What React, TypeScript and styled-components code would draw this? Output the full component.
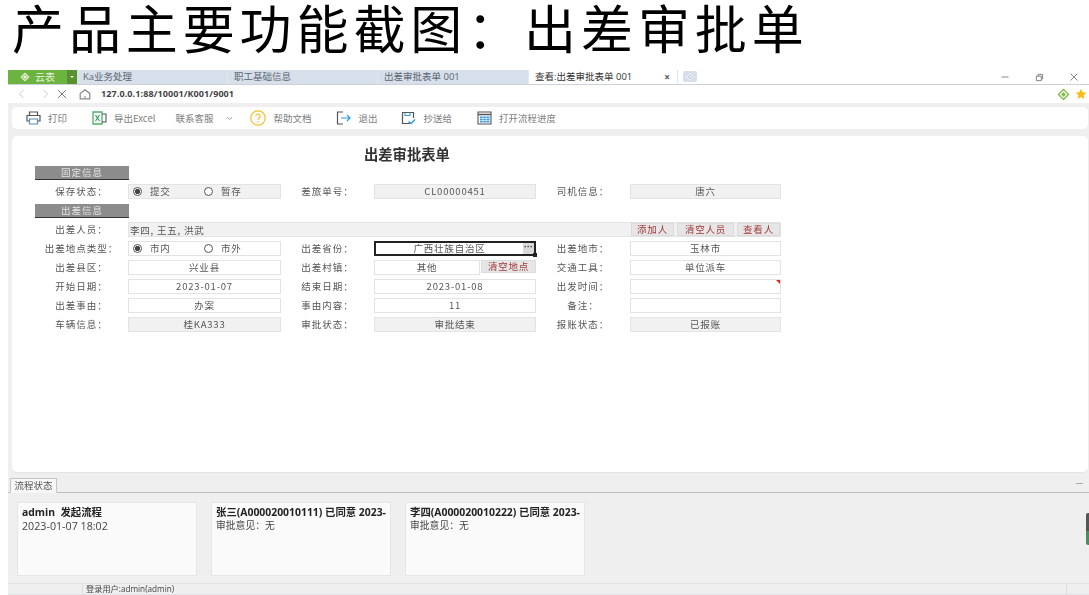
import React from "react";
import styled, { createGlobalStyle } from "styled-components";

const CJK = `"Noto Sans CJK SC", sans-serif`;
const UI = `"Open Sans", "Noto Sans CJK SC", sans-serif`;

const Global = createGlobalStyle`
  html, body { margin: 0; padding: 0; background: #fff; }
  body { width: 1089px; height: 595px; overflow: hidden; font-family: ${UI}; }
  * { box-sizing: border-box; }
`;

const Page = styled.div`
  width: 1089px;
  height: 595px;
  display: flex;
  flex-direction: column;
  overflow: hidden;
`;
const Headline = styled.h1`
  margin: 0;
  height: 70px;
  padding-left: 12px;
  font: 400 52px/54px ${CJK};
  letter-spacing: 4.9px;
  color: #000;
  white-space: nowrap;
`;
const AppWindow = styled.div`
  margin-left: 8px;
  flex: 1;
  min-height: 0;
  display: flex;
  flex-direction: column;
  background: #efefef;
  position: relative;
  filter: blur(0.35px);
`;
const TabBar = styled.div`
  height: 15px;
  display: flex;
  align-items: stretch;
  background: #fff;
  border-bottom: 1px solid #ccd2dc;
  font: 400 9.5px/14px ${UI};
  color: #555;
`;
const Brand = styled.div`
  width: 59px;
  display: flex;
  align-items: center;
  justify-content: center;
  gap: 5px;
  background: #6cb33f;
  color: #e8f4dd;
  font-size: 10px;
`;
const BrandArrow = styled.div`
  width: 10px;
  background: #5a9130;
  display: flex;
  align-items: center;
  justify-content: center;
  &::after {
    content: "";
    border: 2px solid transparent;
    border-top: 2px solid #fff;
    margin-top: 2px;
  }
`;
const Tab = styled.div<{ $active?: boolean; $w: number }>`
  width: ${(p) => p.$w}px;
  padding-left: 6px;
  background: ${(p) => (p.$active ? "#fff" : "#d6dfea")};
  color: ${(p) => (p.$active ? "#333" : "#5d6670")};
  border-right: 1px solid #e2e7ee;
  display: flex;
  align-items: center;
  justify-content: space-between;
  padding-right: 7px;
  white-space: nowrap;
`;
const TabClose = styled.span`
  font-size: 10px;
  font-weight: 700;
  color: #555;
`;
const TabAdd = styled.div`
  width: 14px;
  height: 11px;
  margin: 1px 0 0 5px;
  background: #d6dfea;
  border-radius: 2px;
  display: flex;
  align-items: center;
  justify-content: center;
`;
const WindowControls = styled.div`
  margin-left: auto;
  width: 89px;
  padding-right: 10px;
  display: flex;
  align-items: center;
  justify-content: space-between;
`;
const AddressBar = styled.div`
  height: 18px;
  background: #fff;
  display: flex;
  align-items: center;
  padding: 0 2px 0 9px;
  color: #999;
`;
const NavSlot = styled.span<{ $w: number }>`
  width: ${(p) => p.$w}px;
  display: flex;
  align-items: center;
`;
const Url = styled.span`
  font: 700 9px/12px ${UI};
  color: #444;
  letter-spacing: 0.1px;
`;
const AddressEnd = styled.div`
  margin-left: auto;
  display: flex;
  align-items: center;
  gap: 5px;
`;
const Toolbar = styled.div`
  height: 22px;
  margin: 4px 1px 0 4px;
  padding-left: 14px;
  background: #fff;
  border-radius: 5px;
  display: flex;
  align-items: center;
  font: 400 9.5px/12px ${CJK};
  color: #7d7d7d;
`;
const ToolItem = styled.div<{ $ml?: number }>`
  display: flex;
  align-items: center;
  gap: 7px;
  margin-left: ${(p) => p.$ml ?? 25}px;
  white-space: nowrap;
  &:first-child { margin-left: 0; }
`;
const ChevronGap = styled.span`
  margin-left: 5px;
  display: flex;
`;
const Main = styled.main`
  height: 336px;
  margin: 7px 1px 0 4px;
  padding: 10px 0 0 23px;
  background: #fff;
  border-radius: 5px;
  box-shadow: 0 1px 1px #e4e4e4;
`;
const FormTitle = styled.h2`
  margin: 0 0 0 329px;
  height: 20px;
  font: 700 14.300px/16px ${CJK};
  color: #333;
`;
const SectionHead = styled.div`
  width: 94px;
  height: 14px;
  background: #8c8c8c;
  border-bottom: 1px solid #333;
  color: #e4e4e4;
  font: 400 9.5px/13px ${CJK};
  letter-spacing: 1px;
  text-align: center;
`;
const FormGrid = styled.div`
  width: 746px;
  margin: 4px 0 5px;
  display: grid;
  grid-template-columns: 93px 153px 93px 162px 94px 151px;
  grid-auto-rows: 15px;
  row-gap: 4px;
`;
const Label = styled.div`
  font: 400 9.5px/14px ${CJK};
  letter-spacing: 1px;
  color: #555;
  text-align: center;
  white-space: nowrap;
`;
const Field = styled.div<{ $tone?: "plain" | "gray"; $span?: number }>`
  grid-column: span ${(p) => p.$span ?? 1};
  height: 15px;
  border: 1px solid #e3e3e3;
  background: ${(p) => (p.$tone === "gray" ? "#f1f1f1" : "#fff")};
  font: 400 9.5px/12px ${CJK};
  letter-spacing: 0.8px;
  color: #555;
  text-align: center;
  position: relative;
  white-space: nowrap;
`;
const RadioField = styled(Field)`
  display: flex;
  align-items: center;
  padding-left: 4px;
  text-align: left;
`;
const RadioItem = styled.span<{ $w: number }>`
  width: ${(p) => p.$w}px;
  height: 12px;
  margin-top: -1px;
  display: flex;
  align-items: center;
  gap: 8px;
`;
const RadioMark = styled.span<{ $on?: boolean }>`
  width: 9px;
  height: 9px;
  border-radius: 50%;
  border: 1px solid #555;
  background: ${(p) => (p.$on ? "radial-gradient(circle, #444 0 2.4px, #fff 2.9px)" : "#fff")};
`;
const PeopleField = styled(Field)`
  display: flex;
  align-items: center;
  justify-content: space-between;
  padding: 0 0 0 1px;
  text-align: left;
`;
const RedButtons = styled.span`
  display: flex;
  gap: 3px;
`;
const RedButton = styled.span<{ $w: number }>`
  width: ${(p) => p.$w}px;
  height: 13px;
  background: #e6e6e6;
  border: 1px solid #dcdcdc;
  color: #a33a3a;
  font: 400 9.5px/10px ${CJK};
  letter-spacing: 0.8px;
  text-align: center;
`;
const ActiveField = styled(Field)`
  border: 2px solid #222;
  display: flex;
  line-height: 10px;
`;
const ActiveValue = styled.span`
  flex: 1;
`;
const MoreButton = styled.span`
  width: 11px;
  background: #d9d9d9;
  font: 700 8px/8px ${UI};
  color: #222;
`;
const Handle = styled.span`
  position: absolute;
  right: -3px;
  bottom: -3px;
  width: 4px;
  height: 4px;
  background: #222;
`;
const SplitCell = styled.div`
  display: flex;
  gap: 1px;
`;
const SplitField = styled(Field)`
  flex: 1;
`;
const Corner = styled.span`
  position: absolute;
  top: 0;
  right: 0;
  border: 2px solid transparent;
  border-top-color: #d22;
  border-right-color: #d22;
`;
const Bottom = styled.section`
  flex: 1;
  min-height: 0;
  display: flex;
  flex-direction: column;
`;
const BottomTabs = styled.div`
  height: 21px;
  padding: 6px 6px 0 2px;
  display: flex;
  align-items: flex-end;
  justify-content: space-between;
  border-bottom: 1px solid #bdbdbd;
`;
const FlowTab = styled.div`
  width: 47px;
  height: 15px;
  margin-bottom: -1px;
  background: #f7f7f7;
  border: 1px solid #c4c4c4;
  border-bottom-color: #f7f7f7;
  font: 400 9.5px/13px ${CJK};
  color: #555;
  text-align: center;
`;
const Collapse = styled.span`
  width: 7px;
  height: 1px;
  background: #aaa;
  margin-bottom: 8px;
`;
const Cards = styled.div`
  height: 91px;
  padding: 9px 0 0 9px;
  display: flex;
  gap: 14px;
  border-bottom: 1px solid #e2e2e2;
`;
const Card = styled.div`
  width: 180px;
  height: 74px;
  padding: 2px 1px 0 4px;
  background: #fafafa;
  border: 1px solid #e6e6e6;
  color: #444;
`;
const CardTitle = styled.div`
  font: 700 10.4px/14px ${UI};
  color: #222;
  white-space: nowrap;
`;
const CardText = styled.div<{ $big?: boolean }>`
  font: 400 ${(p) => (p.$big ? 10.7 : 9.8)}px/14px ${UI};
  white-space: nowrap;
`;
const StatusBar = styled.footer`
  flex: 1;
  display: flex;
  font: 400 8.2px/10px ${UI};
  color: #444;
  border-bottom: 1px solid #dfe6e6;
`;
const StatusCell = styled.div<{ $w: number }>`
  width: ${(p) => p.$w}px;
  padding-left: 3px;
  border-right: 1px solid #ddd;
`;
const SideGrip = styled.span`
  position: absolute;
  right: 0;
  top: 443px;
  width: 3px;
  height: 32px;
  border-radius: 2px 0 0 2px;
  background: linear-gradient(#555 0 55%, #4f8a5e 55%);
`;

const Lattice = ({ color, size = 10, hole = "#fff" }: { color: string; size?: number; hole?: string }) => (
  <svg width={size} height={size} viewBox="0 0 12 12">
    <path d="M6 .5 11.5 6 6 11.5 .5 6z" fill={color} />
    <path d="M6 3 9 6 6 9 3 6z" fill="none" stroke={hole} strokeWidth="1" />
  </svg>
);
const Star = () => (
  <svg width="12" height="12" viewBox="0 0 24 24">
    <path d="M12 1.5l3.2 6.9 7.5.9-5.6 5.1 1.5 7.4-6.6-3.7-6.6 3.7 1.5-7.4L1.300 9.300l7.500-.9z" fill="#fdb813" />
  </svg>
);
const Line = ({ d, size = 10, color = "#999", w = 1 }: { d: string; size?: number; color?: string; w?: number }) => (
  <svg width={size} height={size} viewBox="0 0 10 10" fill="none" stroke={color} strokeWidth={w}>
    <path d={d} />
  </svg>
);
const PrintIcon = () => (
  <svg width="15" height="14" viewBox="0 0 15 14" fill="none" stroke="#555" strokeWidth="1.200">
    <path d="M3.500 4V1h8v3M3.500 10H1V4.500h13V10h-2.500" />
    <path d="M3.500 8h8v5h-8z" stroke="#5b8fb0" />
  </svg>
);
const ExcelIcon = () => (
  <svg width="15" height="14" viewBox="0 0 15 14" fill="none">
    <path d="M1 1h9v12H1z" stroke="#4fb06c" strokeWidth="1.300" />
    <path d="M3.500 4l4 6M7.500 4l-4 6" stroke="#2f9a52" strokeWidth="1.200" />
    <path d="M10 3h4v8h-4" stroke="#555" strokeWidth="1.100" />
  </svg>
);
const HelpIcon = () => (
  <svg width="16" height="16" viewBox="0 0 16 16" fill="none">
    <circle cx="8" cy="8" r="7.200" stroke="#f7bd2f" strokeWidth="1.200" />
    <path d="M5.800 6.200a2.200 2.200 0 1 1 3.400 1.900C8.400 8.600 8 9 8 10" stroke="#f7bd2f" strokeWidth="1.200" />
    <circle cx="8" cy="12" r=".8" fill="#f7bd2f" />
  </svg>
);
const ExitIcon = () => (
  <svg width="15" height="14" viewBox="0 0 15 14" fill="none">
    <path d="M7 1H1.500v12H7" stroke="#555" strokeWidth="1.200" />
    <path d="M5 7h9M11 4l3 3-3 3" stroke="#2f9be0" strokeWidth="1.200" />
  </svg>
);
const CopyIcon = () => (
  <svg width="15" height="14" viewBox="0 0 15 14" fill="none">
    <path d="M9 12.500H1.500v-11h11V7" stroke="#555" strokeWidth="1.200" />
    <path d="M4 1.500v3h5v-3" stroke="#2f9be0" strokeWidth="1.100" />
    <path d="M7.500 10.500l2.500 2 4-4" stroke="#2f9be0" strokeWidth="1.500" />
  </svg>
);
const TableIcon = () => (
  <svg width="15" height="14" viewBox="0 0 15 14" fill="none">
    <path d="M1 1h13v12H1z" stroke="#555" strokeWidth="1.100" />
    <path d="M1 3.500h13" stroke="#555" strokeWidth="1.500" />
    <path d="M3 5.500h9.500v6H3z" fill="#3f9ae0" />
    <path d="M3 7.500h9.500M3 9.500h9.500M6 5.500v6M9.200 5.500v6" stroke="#fff" strokeWidth=".6" />
  </svg>
);

const Radios = ({ a, b }: { a: string; b: string }) => (
  <>
    <RadioItem $w={71}><RadioMark $on />{a}</RadioItem>
    <RadioItem $w={70}><RadioMark />{b}</RadioItem>
  </>
);

export default function App() {
  return (
    <Page>
      <Global />
      <Headline>产品主要功能截图：出差审批单</Headline>
      <AppWindow>
        <TabBar>
          <Brand><Lattice color="#eaf5df" hole="#6cb33f" />云表</Brand>
          <BrandArrow />
          <Tab $w={151}>Ka业务处理</Tab>
          <Tab $w={150}>职工基础信息</Tab>
          <Tab $w={151}>出差审批表单 001</Tab>
          <Tab $w={149} $active>查看:出差审批表单 001<TabClose>×</TabClose></Tab>
          <TabAdd><Lattice color="#eef2f6" size={8} hole="#a9b4c0" /></TabAdd>
          <WindowControls>
            <Line d="M1.500 5h7" color="#888" />
            <Line d="M1.500 3.500h5.500v5h-5.500zM3.500 3.500v-2h5v5h-1.500" color="#777" size={9} />
            <Line d="M1.500 1.500l7 7M8.500 1.500l-7 7" color="#888" />
          </WindowControls>
        </TabBar>
        <AddressBar>
          <NavSlot $w={23}><Line d="M6.500 1 2.500 5l4 4" color="#ccc" /></NavSlot>
          <NavSlot $w={17}><Line d="M3.500 1l4 4-4 4" color="#ccc" /></NavSlot>
          <NavSlot $w={22}><Line d="M1 1l8 8M9 1l-8 8" color="#777" /></NavSlot>
          <NavSlot $w={22}><Line d="M1 4.500 5 1.500l4 3v4.500H1zM4 7.500h2" color="#888" size={12} /></NavSlot>
          <Url>127.0.0.1:88/10001/K001/9001</Url>
          <AddressEnd><Lattice color="#82bd45" size={13} /><Star /></AddressEnd>
        </AddressBar>
        <Toolbar>
          <ToolItem><PrintIcon />打印</ToolItem>
          <ToolItem><ExcelIcon />导出Excel</ToolItem>
          <ToolItem $ml={20}>联系客服<ChevronGap><Line d="M2 3.500 5 6l3-2.500" color="#999" size={9} /></ChevronGap></ToolItem>
          <ToolItem $ml={16}><HelpIcon />帮助文档</ToolItem>
          <ToolItem><ExitIcon />退出</ToolItem>
          <ToolItem $ml={24}><CopyIcon />抄送给</ToolItem>
          <ToolItem><TableIcon />打开流程进度</ToolItem>
        </Toolbar>
        <Main>
          <FormTitle>出差审批表单</FormTitle>
          <SectionHead>固定信息</SectionHead>
          <FormGrid>
            <Label>保存状态：</Label>
            <RadioField $tone="gray"><Radios a="提交" b="暂存" /></RadioField>
            <Label>差旅单号：</Label>
            <Field $tone="gray">CL00000451</Field>
            <Label>司机信息：</Label>
            <Field $tone="gray">唐六</Field>
          </FormGrid>
          <SectionHead>出差信息</SectionHead>
          <FormGrid>
            <Label>出差人员：</Label>
            <PeopleField $tone="gray" $span={5}>
              李四, 王五, 洪武
              <RedButtons>
                <RedButton $w={43}>添加人</RedButton>
                <RedButton $w={57}>清空人员</RedButton>
                <RedButton $w={43}>查看人</RedButton>
              </RedButtons>
            </PeopleField>
            <Label>出差地点类型：</Label>
            <RadioField><Radios a="市内" b="市外" /></RadioField>
            <Label>出差省份：</Label>
            <ActiveField><ActiveValue>广西壮族自治区</ActiveValue><MoreButton>···</MoreButton><Handle /></ActiveField>
            <Label>出差地市：</Label>
            <Field>玉林市</Field>

            <Label>出差县区：</Label>
            <Field>兴业县</Field>
            <Label>出差村镇：</Label>
            <SplitCell>
              <SplitField>其他</SplitField>
              <RedButton $w={55}>清空地点</RedButton>
            </SplitCell>
            <Label>交通工具：</Label>
            <Field>单位派车</Field>

            <Label>开始日期：</Label>
            <Field>2023-01-07</Field>
            <Label>结束日期：</Label>
            <Field>2023-01-08</Field>
            <Label>出发时间：</Label>
            <Field><Corner /></Field>

            <Label>出差事由：</Label>
            <Field>办案</Field>
            <Label>事由内容：</Label>
            <Field>11</Field>
            <Label>备注：</Label>
            <Field />

            <Label>车辆信息：</Label>
            <Field $tone="gray">桂KA333</Field>
            <Label>审批状态：</Label>
            <Field $tone="gray">审批结束</Field>
            <Label>报账状态：</Label>
            <Field $tone="gray">已报账</Field>
          </FormGrid>
        </Main>
        <Bottom>
          <BottomTabs>
            <FlowTab>流程状态</FlowTab>
            <Collapse />
          </BottomTabs>
          <Cards>
            <Card>
              <CardTitle>admin&nbsp; 发起流程</CardTitle>
              <CardText $big>2023-01-07 18:02</CardText>
            </Card>
            <Card>
              <CardTitle>张三(A000020010111) 已同意 2023-</CardTitle>
              <CardText>审批意见：无</CardText>
            </Card>
            <Card>
              <CardTitle>李四(A000020010222) 已同意 2023-</CardTitle>
              <CardText>审批意见：无</CardText>
            </Card>
          </Cards>
          <StatusBar>
            <StatusCell $w={75} />
            <StatusCell $w={984}>登录用户:admin(admin)</StatusCell>
          </StatusBar>
        </Bottom>
        <SideGrip />
      </AppWindow>
    </Page>
  );
}
